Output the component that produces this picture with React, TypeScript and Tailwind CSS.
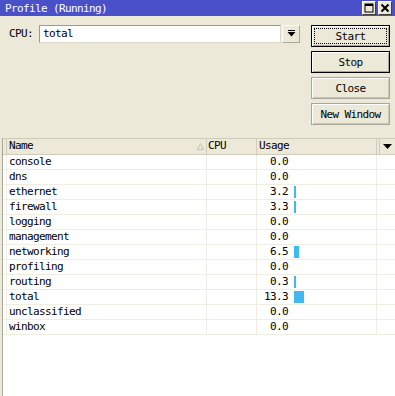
import React from "react";

const rows = [
  { name: "console", usage: 0.0 },
  { name: "dns", usage: 0.0 },
  { name: "ethernet", usage: 3.2 },
  { name: "firewall", usage: 3.3 },
  { name: "logging", usage: 0.0 },
  { name: "management", usage: 0.0 },
  { name: "networking", usage: 6.5 },
  { name: "profiling", usage: 0.0 },
  { name: "routing", usage: 0.3 },
  { name: "total", usage: 13.3 },
  { name: "unclassified", usage: 0.0 },
  { name: "winbox", usage: 0.0 },
];

const mono = "font-['DejaVu_Sans_Mono',_'Liberation_Mono',_monospace] text-[11px] tracking-[-0.62px]";

function WinButton({ label, variant }: { label: string; variant: "default" | "dark" | "plain" }) {
  const outer =
    variant === "plain"
      ? "border border-[#a9a79a] shadow-[inset_1px_1px_0_#ffffff,inset_-1px_-1px_0_#c9c6b6]"
      : "border border-black shadow-[inset_1px_1px_0_#ffffff,inset_-1px_-1px_0_#a9a79a]";
  return (
    <button className={`h-[22px] w-[79px] bg-[#ece9d8] ${outer} p-[2px] text-black ${mono} leading-none`}>
      <div
        className={`flex h-full w-full items-center justify-center ${
          variant === "default" ? "border border-dotted border-black" : ""
        }`}
      >
        {label}
      </div>
    </button>
  );
}

export default function App() {
  return (
    <div className={`w-[395px] h-[396px] overflow-hidden bg-[#ece9d8] flex flex-col ${mono} text-black`}>
      {/* Title bar */}
      <div className="h-[16px] bg-[#4a50c8] flex items-center justify-between pl-[5px] pr-[3px]">
        <span className="text-white text-[11px] leading-none pt-[1px]">Profile (Running)</span>
        <div className="flex gap-[2px]">
          <div className="w-[14px] h-[14px] bg-[#ece9d8] border border-t-white border-l-white border-b-[#404040] border-r-[#404040] flex items-center justify-center">
            <svg width="10" height="10" viewBox="0 0 10 10">
              <rect x="1" y="1" width="8" height="8" fill="none" stroke="#000" strokeWidth="1" />
              <rect x="1" y="1" width="8" height="2" fill="#000" />
            </svg>
          </div>
          <div className="w-[14px] h-[14px] bg-[#ece9d8] border border-t-white border-l-white border-b-[#404040] border-r-[#404040] flex items-center justify-center">
            <svg width="10" height="10" viewBox="0 0 10 10">
              <path d="M1.5 1.5 L8.5 8.5 M8.5 1.5 L1.5 8.5" stroke="#000" strokeWidth="2" />
            </svg>
          </div>
        </div>
      </div>

      {/* Top panel */}
      <div className="h-[122px] flex pt-[9px] pl-[9px]">
        <div className="flex items-start">
          <span className="w-[30px] h-[18px] flex items-center">CPU:</span>
          <div className="w-[242px] h-[18px] bg-white border border-t-[#9c9a8c] border-l-[#9c9a8c] border-b-[#dcd9c8] border-r-[#dcd9c8] flex items-center pl-[3px]">
            total
          </div>
          <div className="ml-[1px] w-[18px] h-[18px] border border-t-white border-l-white border-b-[#a9a79a] border-r-[#a9a79a] flex items-center justify-center">
            <svg width="9" height="8" viewBox="0 0 9 8">
              <rect x="1" y="0" width="7" height="1" fill="#000" />
              <path d="M0.5 2 H8.5 L4.5 6.5 Z" fill="#000" />
            </svg>
          </div>
        </div>
        <div className="ml-[11px] flex flex-col gap-[4px]">
          <WinButton label="Start" variant="default" />
          <WinButton label="Stop" variant="dark" />
          <WinButton label="Close" variant="plain" />
          <WinButton label="New Window" variant="plain" />
        </div>
      </div>

      {/* Table */}
      <div className="flex-1 ml-[2px] border-l border-[#a9a79a] bg-white flex flex-col">
        {/* Header */}
        <div className="h-[17px] flex bg-[#ece9d8] border-t border-b border-[#cfccbb]">
          <div className="w-[4px] border-r border-[#cfccbb]" />
          <div className="w-[200px] border-r border-[#cfccbb] flex items-center justify-between pl-[2px] pr-[2px]">
            <span>Name</span>
            <svg width="7" height="7" viewBox="0 0 7 7">
              <path d="M3.5 0.5 L6.5 6.5 H0.5 Z" fill="#ece9d8" stroke="#c5c2b2" strokeWidth="1" />
            </svg>
          </div>
          <div className="w-[50px] border-r border-[#cfccbb] flex items-center pl-[1px]">CPU</div>
          <div className="w-[120px] border-r border-[#cfccbb] flex items-center pl-[2px]">Usage</div>
          <div className="w-[3px] border-r border-[#cfccbb]" />
          <div className="flex-1 flex items-center justify-center">
            <svg width="9" height="5" viewBox="0 0 9 5">
              <path d="M0 0 H9 L4.5 5 Z" fill="#000" />
            </svg>
          </div>
        </div>
        {/* Rows */}
        {rows.map((r) => (
          <div key={r.name} className="h-[15px] flex border-b border-[#f0eee2]">
            <div className="w-[4px] border-r border-[#f0eee2]" />
            <div className="w-[200px] border-r border-[#f0eee2] flex items-center pl-[2px]">{r.name}</div>
            <div className="w-[50px] border-r border-[#f0eee2]" />
            <div className="w-[120px] border-r border-[#f0eee2] flex items-center">
              <span className="w-[31px] text-right">{r.usage.toFixed(1)}</span>
              {r.usage > 0 && (
                <div
                  className="ml-[6px] h-[12px] bg-[#40b9ee]"
                  style={{ width: Math.max(2, Math.round(r.usage * 0.75)) }}
                />
              )}
            </div>
            <div className="flex-1" />
          </div>
        ))}
      </div>
    </div>
  );
}
